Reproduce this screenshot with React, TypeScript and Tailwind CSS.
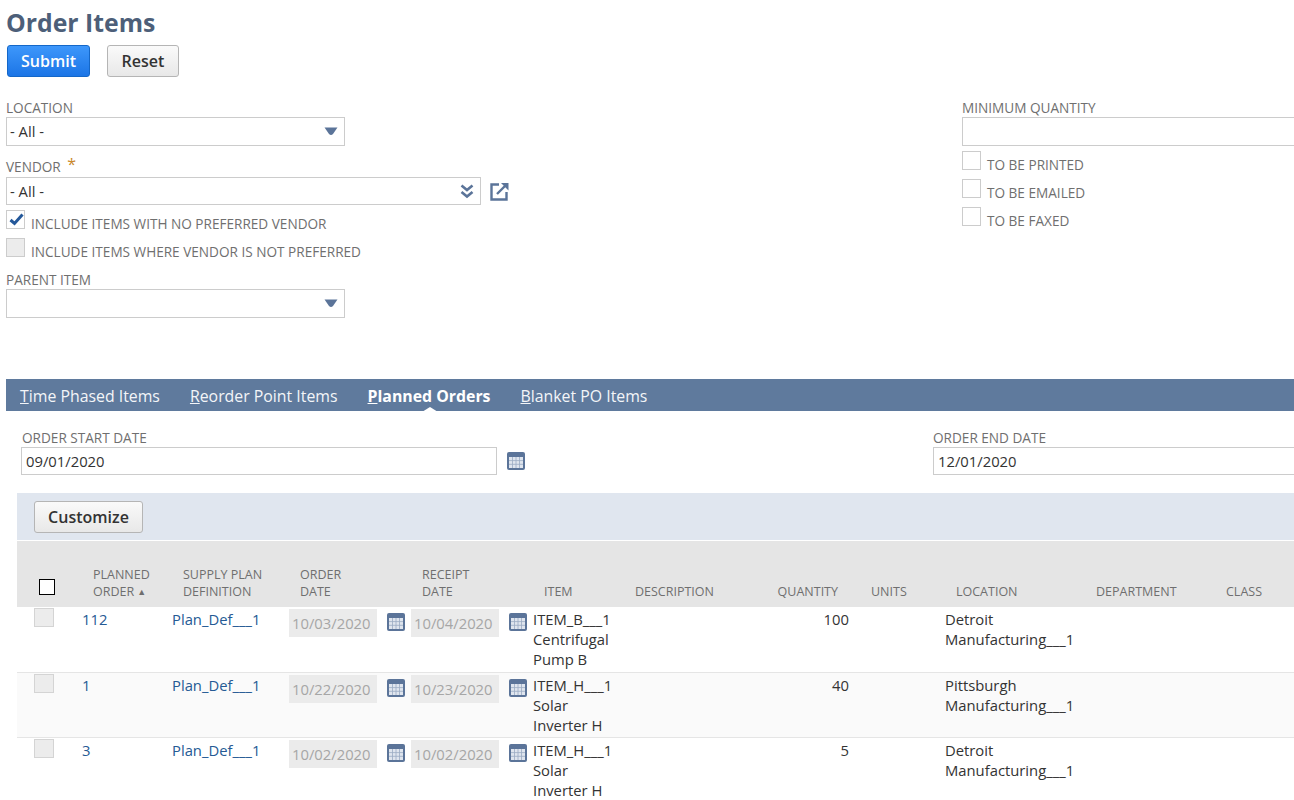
import React from "react";

const rows = [
  { id: "112", order: "10/03/2020", receipt: "10/04/2020", item: "ITEM_B___1", name: "Centrifugal Pump B", qty: "100", loc: "Detroit Manufacturing___1", alt: false },
  { id: "1", order: "10/22/2020", receipt: "10/23/2020", item: "ITEM_H___1", name: "Solar Inverter H", qty: "40", loc: "Pittsburgh Manufacturing___1", alt: true },
  { id: "3", order: "10/02/2020", receipt: "10/02/2020", item: "ITEM_H___1", name: "Solar Inverter H", qty: "5", loc: "Detroit Manufacturing___1", alt: false },
];

const gridCols =
  "grid grid-cols-[65px_90px_117px_122px_122px_91px_117px_119px_85px_140px_130px_79px]";

const Caret = () => (
  <svg width="14" height="9" viewBox="0 0 14 9" className="shrink-0">
    <path d="M0.5 0.5 H13.5 L9 7 Q7 9 5 7 Z" fill="#5b7499" />
  </svg>
);

const DoubleChevron = () => (
  <svg width="14" height="15" viewBox="0 0 14 15" className="shrink-0">
    <path d="M1.5 1.5 L7 6 L12.5 1.5" fill="none" stroke="#5b7499" strokeWidth="2.6" />
    <path d="M1.5 8 L7 12.5 L12.5 8" fill="none" stroke="#5b7499" strokeWidth="2.6" />
  </svg>
);

const OpenLink = () => (
  <svg width="19" height="19" viewBox="0 0 19 19" className="shrink-0">
    <path d="M9 2.5 H1.5 V17.5 H16.5 V10" fill="none" stroke="#5b7499" strokeWidth="2.4" />
    <path d="M7 12 L16 3" fill="none" stroke="#5b7499" strokeWidth="2.4" />
    <path d="M11 1 H18.5 V8.5 Z" fill="#5b7499" />
  </svg>
);

const CalendarIcon = () => (
  <svg width="18" height="18" viewBox="0 0 18 18" className="shrink-0">
    <rect x="0" y="0" width="18" height="18" rx="2" fill="#5b7499" />
    <rect x="2" y="5" width="14" height="11" fill="#dfe5ee" />
    <path d="M5.5 5 V16 M9 5 V16 M12.5 5 V16 M2 8.6 H16 M2 12.3 H16" stroke="#9aabc3" strokeWidth="0.8" />
  </svg>
);

const Label = ({ children }: { children: React.ReactNode }) => (
  <div className="text-[13.6px] leading-[18px] text-[#6f6f6f]">{children}</div>
);

const Check = ({
  label,
  checked,
  disabled,
}: {
  label: string;
  checked?: boolean;
  disabled?: boolean;
}) => (
  <div className="flex h-[28px] items-start">
    <div
      className={`relative h-[19px] w-[19px] border border-[#cccccc] ${
        disabled ? "bg-[#ececec]" : "bg-white"
      }`}
    >
      {checked && (
        <svg width="17" height="15" viewBox="0 0 17 15" className="absolute left-[1px] top-[1px]">
          <path d="M2.5 8 L6.5 11.5 L14.5 2.5" fill="none" stroke="#24589a" strokeWidth="3" />
        </svg>
      )}
    </div>
    <span className="ml-[6px] mt-[5px] text-[13.6px] leading-[18px] text-[#6f6f6f]">{label}</span>
  </div>
);

const Select = ({ value, double, className }: { value?: string; double?: boolean; className: string }) => (
  <div
    className={`flex items-center justify-between border border-[#cccccc] bg-white pl-[3px] pr-[6px] text-[14.8px] text-[#333333] ${className}`}
  >
    <span>{value}</span>
    {double ? <DoubleChevron /> : <Caret />}
  </div>
);

const HeadCell = ({ lines, sort, right }: { lines: string[]; sort?: boolean; right?: boolean }) => (
  <div
    className={`flex flex-col justify-end pb-[7px] text-[12.5px] leading-[17px] text-[#6f6f6f] ${
      right ? "items-end pr-[22px]" : "pl-[11px]"
    }`}
  >
    {lines.map((l, i) => (
      <span key={l}>
        {l}
        {sort && i === lines.length - 1 && <span className="ml-[3px] text-[9px] align-[1px]">▲</span>}
      </span>
    ))}
  </div>
);

const DateCell = ({ value }: { value: string }) => (
  <div className="flex items-start pt-[2px]">
    <div className="flex h-[28px] w-[88px] items-center bg-[#ebebeb] pl-[3px] text-[14.8px] text-[#a6a6a6]">
      {value}
    </div>
    <div className="ml-[10px] mt-[4px]">
      <CalendarIcon />
    </div>
  </div>
);

export default function App() {
  return (
    <div
      className="h-[800px] w-[1294px] overflow-hidden bg-white"
      style={{ fontFamily: '"Open Sans", sans-serif' }}
    >
      <div className="pl-[6px] pt-[5px]">
        <h1 className="text-[24.8px] font-bold leading-[35px] text-[#4d5f79]">Order Items</h1>
        <div className="ml-[1px] mt-[5px] flex gap-[17px]">
          <button className="h-[32px] w-[83px] rounded-[3px] border border-[#1467c8] bg-gradient-to-b from-[#3d97fb] to-[#1b75e6] text-[16px] font-semibold text-white">
            Submit
          </button>
          <button className="h-[32px] w-[72px] rounded-[3px] border border-[#b5b5b5] bg-gradient-to-b from-[#fafafa] to-[#e8e8e8] text-[16px] font-semibold text-[#333333]">
            Reset
          </button>
        </div>

        <div className="mt-[22px] flex">
          <div className="w-[956px] shrink-0">
            <Label>LOCATION</Label>
            <Select value="- All -" className="h-[29px] w-[339px]" />
            <div className="mt-[11px]">
              <Label>
                VENDOR <span className="ml-[3px] align-[2px] text-[16px] leading-[14px] text-[#c9882b]">*</span>
              </Label>
            </div>
            <div className="mt-[1px] flex items-center">
              <Select value="- All -" double className="h-[28px] w-[475px]" />
              <div className="ml-[9px]">
                <OpenLink />
              </div>
            </div>
            <div className="mt-[5px]">
              <Check label="INCLUDE ITEMS WITH NO PREFERRED VENDOR" checked />
              <Check label="INCLUDE ITEMS WHERE VENDOR IS NOT PREFERRED" disabled />
            </div>
            <div className="mt-[5px]">
              <Label>PARENT ITEM</Label>
            </div>
            <Select className="h-[29px] w-[339px]" />
          </div>
          <div className="w-[400px] shrink-0">
            <Label>MINIMUM QUANTITY</Label>
            <div className="h-[29px] w-[400px] border border-[#cccccc] bg-white" />
            <div className="mt-[5px]">
              <Check label="TO BE PRINTED" />
              <Check label="TO BE EMAILED" />
              <Check label="TO BE FAXED" />
            </div>
          </div>
        </div>
      </div>

      <div className="ml-[6px] mt-[61px] flex h-[32px] items-center gap-[30px] bg-[#5f7a9d] pl-[14px] pt-[3px] text-[15.85px] text-[#f3f5f8]">
        <span><span className="underline">T</span>ime Phased Items</span>
        <span><span className="underline">R</span>eorder Point Items</span>
        <span className="relative font-bold text-white">
          <span className="underline">P</span>lanned Orders
          <span className="absolute bottom-[-4px] left-[54px] h-0 w-0 border-x-[8px] border-b-[5px] border-x-transparent border-b-white" />
        </span>
        <span><span className="underline">B</span>lanket PO Items</span>
      </div>

      <div className="mt-[18px] flex">
        <div className="ml-[21px] w-[912px] shrink-0">
          <div className="pl-[1px]"><Label>ORDER START DATE</Label></div>
          <div className="flex items-center">
            <div className="flex h-[28px] w-[476px] items-center border border-[#cccccc] pl-[4px] text-[14.8px] text-[#333333]">
              09/01/2020
            </div>
            <div className="ml-[10px]"><CalendarIcon /></div>
          </div>
        </div>
        <div className="w-[400px] shrink-0">
          <Label>ORDER END DATE</Label>
          <div className="flex h-[28px] w-[400px] items-center border border-[#cccccc] pl-[4px] text-[14.8px] text-[#333333]">
            12/01/2020
          </div>
        </div>
      </div>

      <div className="ml-[17px] mt-[18px]">
        <div className="flex h-[47px] items-center bg-[#e0e6ef] pl-[17px]">
          <button className="h-[32px] w-[109px] rounded-[3px] border border-[#b5b5b5] bg-gradient-to-b from-[#fafafa] to-[#e8e8e8] text-[16px] font-semibold text-[#333333]">
            Customize
          </button>
        </div>
        <div className={`${gridCols} h-[67px] border-t border-white bg-[#e5e5e5]`}>
          <div className="flex items-end pb-[12px] pl-[22px]">
            <div className="h-[16px] w-[16px] border border-black bg-white" />
          </div>
          <HeadCell lines={["PLANNED", "ORDER"]} sort />
          <HeadCell lines={["SUPPLY PLAN", "DEFINITION"]} />
          <HeadCell lines={["ORDER", "DATE"]} />
          <HeadCell lines={["RECEIPT", "DATE"]} />
          <HeadCell lines={["ITEM"]} />
          <HeadCell lines={["DESCRIPTION"]} />
          <HeadCell lines={["QUANTITY"]} right />
          <HeadCell lines={["UNITS"]} />
          <HeadCell lines={["LOCATION"]} />
          <HeadCell lines={["DEPARTMENT"]} />
          <HeadCell lines={["CLASS"]} />
        </div>
        {rows.map((r) => (
          <div
            key={r.id}
            className={`${gridCols} border-b border-[#e5e5e5] text-[14.8px] leading-[20px] text-[#333333] ${
              r.alt ? "h-[65px] bg-[#fafafa]" : "h-[66px] bg-white"
            }`}
          >
            <div className="pl-[17px] pt-[1px]">
              <div className="h-[19px] w-[20px] border border-[#d4d4d4] bg-[#ececec]" />
            </div>
            <div className="pt-[2px] text-[#255a94]">{r.id}</div>
            <div className="pt-[2px] text-[#255a94]">Plan_Def___1</div>
            <DateCell value={r.order} />
            <DateCell value={r.receipt} />
            <div className="pt-[2px]">
              {r.item}
              <br />
              {r.name}
            </div>
            <div />
            <div className="pr-[11px] pt-[2px] text-right">{r.qty}</div>
            <div />
            <div className="pt-[2px]">{r.loc}</div>
            <div />
            <div />
          </div>
        ))}
      </div>
    </div>
  );
}
